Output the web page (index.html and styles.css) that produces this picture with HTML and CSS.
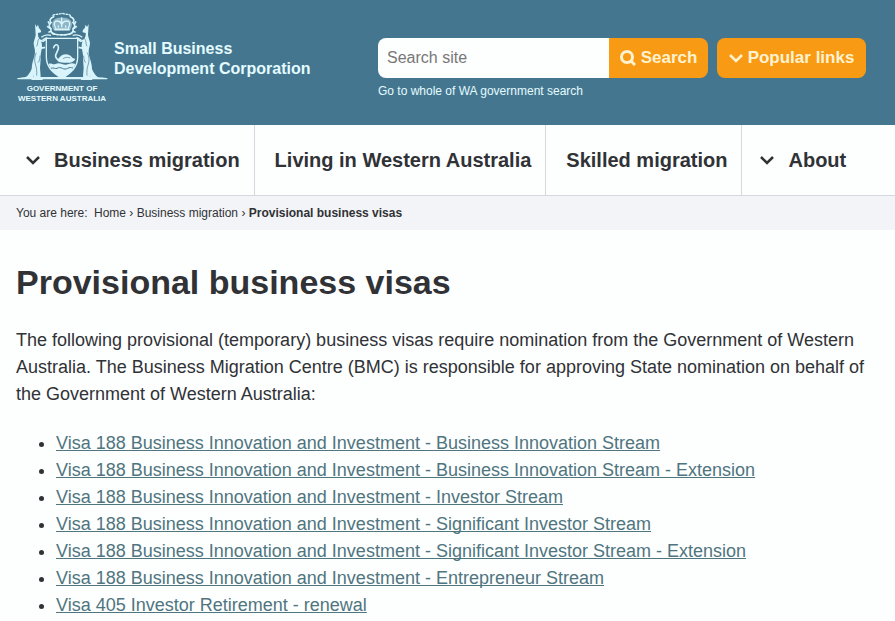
FILE: index.html
```
<!DOCTYPE html>
<html lang="en">
<head>
    <meta charset="UTF-8">
    <meta name="viewport" content="width=device-width, initial-scale=1.0">
    <title>Provisional business visas - Small Business Development Corporation</title>
    <link rel="stylesheet" href="styles.css">
</head>
<body>
    <header class="site-header">
        <div class="brand">
            <a href="#" class="crest">
                <svg class="crest-image" viewBox="45 36 276 204" aria-hidden="true">
                    <!-- mantling and crown -->
                    <path d="M158 60c8-10 40-10 50 0 8 10 4 24-2 32h-46c-8-8-10-22-2-32z" fill="#8fb6c6"/>
                    <g fill="none" stroke="#d9f5fb" stroke-width="5" stroke-linecap="round">
                        <path d="M158 50c-10 4-14 12-8 18-8 6-6 14 0 18-2 8 2 14 10 16M208 50c10 4 14 12 8 18 8 6 6 14 0 18 2 8-2 14-10 16"/>
                        <path d="M142 66l4 6M140 80l6 4M144 96l6-2M224 66l-4 6M226 80l-6 4M222 96l-6-2"/>
                        <path d="M156 46c6-4 12-2 18-4s12-2 18 0 10 0 16 4" stroke-width="4" stroke-dasharray="5 5"/>
                        <path d="M164 84c-8-12-4-22 6-21 8 0 10 6 12 10 2-4 6-10 14-10 10-1 14 9 6 21" stroke-width="4"/>
                        <path d="M182 54v26M172 78v3M194 78v3" stroke-width="4"/>
                        <path d="M162 88h42"/>
                        <path d="M156 101c16 5 38 5 54 0" stroke-dasharray="7 4"/>
                    </g>
                    <!-- shield -->
                    <path d="M136 115h94v56c0 31-20 48-47 64-27-16-47-33-47-64z" fill="#47778f" stroke="#d9f5fb" stroke-width="4"/>
                    <path d="M143 192c8-5 12 3 20 0s12-3 20 0 12 3 20 0 12-3 20 0c-5 20-20 31-40 42-20-11-34-22-40-42z" fill="#d9f5fb"/>
                    <path d="M150 205c8-4 12 3 18 0s10-3 16 0 10 3 16 0 10-3 16-1" fill="none" stroke="#47778f" stroke-width="3"/>
                    <!-- swan -->
                    <path d="M158 143c2-10 12-12 14-3 3 11-10 19-8 30 1 6 5 9 10 11" fill="none" stroke="#d9f5fb" stroke-width="5" stroke-linecap="round"/>
                    <path d="M169 183c3-10 14-21 27-20 9 1 15 6 19 11l8 3c-4 7-9 10-16 11-13 1-27 1-38-5z" fill="#d9f5fb"/>
                    <path d="M186 176c8-5 15-5 22-2" fill="none" stroke="#47778f" stroke-width="2"/>
                    <!-- kangaroos -->
                    <g id="kangaroo">
                        <path d="M102 72l5 9 4-7 3 11c5 4 7 8 6 12l-9 2c-1 8 2 15 7 21 5 8 6 17 4 27-2 12-4 19-3 29l-2 28 2 25-3 6 9 2v5H92l-1-6 8-5c-5-9-8-21-6-35 2-15 9-26 9-40 0-12-4-18-4-27 1-9 5-15 6-24z" fill="#d9f5fb"/>
                        <path d="M96 198c-6 14-12 29-25 35l27 2z" fill="#d9f5fb"/>
                        <path d="M113 119l13 5 9-6M112 135l11 9 9-2" fill="none" stroke="#d9f5fb" stroke-width="5"/>
                        <path d="M106 158c-5 10-7 22-3 34s5 22 4 35M114 116c-6 8-2 14-7 23M111 188c4-4 6-12 6-21" fill="none" stroke="#47778f" stroke-width="2"/>
                        <path d="M121 112c9-8 17-9 29-6M124 121c6-5 8-7 15-8" fill="none" stroke="#d9f5fb" stroke-width="4"/>
                    </g>
                    <use href="#kangaroo" transform="translate(365 0) scale(-1 1)"/>
                    <path d="M48 235c22-6 42-4 58-4h156c16 0 38 0 58 4l-2 3H50z" fill="#d9f5fb"/>
                </svg>
                <span class="crest-text">Government of<br>Western Australia</span>
            </a>
            <a href="#" class="brand-name">Small Business<br>Development Corporation</a>
        </div>
        <div class="header-tools">
            <div class="tools-row">
                <form class="search-form" action="#">
                    <input type="text" class="search-input" placeholder="Search site" aria-label="Search site">
                    <button type="submit" class="btn search-button">
                        <svg class="search-icon" viewBox="0 0 16 16" aria-hidden="true"><circle cx="7" cy="7" r="5.5"/><path d="M11 11l4 4"/></svg>
                        Search
                    </button>
                </form>
                <button type="button" class="btn popular-button">
                    <svg class="chevron" viewBox="0 0 14 10" aria-hidden="true"><path d="M1 2l6 6 6-6"/></svg>
                    Popular links
                </button>
            </div>
            <a href="#" class="whole-search">Go to whole of WA government search</a>
        </div>
    </header>

    <nav class="main-nav">
        <a href="#" class="has-menu"><svg class="chevron" viewBox="0 0 14 10" aria-hidden="true"><path d="M1 2l6 6 6-6"/></svg>Business migration</a>
        <a href="#">Living in Western Australia</a>
        <a href="#">Skilled migration</a>
        <a href="#" class="has-menu"><svg class="chevron" viewBox="0 0 14 10" aria-hidden="true"><path d="M1 2l6 6 6-6"/></svg>About</a>
    </nav>

    <div class="breadcrumb">
        <span class="breadcrumb-label">You are here:</span>
        <a href="#">Home</a> › <a href="#">Business migration</a> › <strong>Provisional business visas</strong>
    </div>

    <main class="content">
        <h1>Provisional business visas</h1>
        <p>The following provisional (temporary) business visas require nomination from the Government of Western Australia. The Business Migration Centre (BMC) is responsible for approving State nomination on behalf of the Government of Western Australia:</p>
        <ul>
            <li><a href="#">Visa 188 Business Innovation and Investment - Business Innovation Stream</a></li>
            <li><a href="#">Visa 188 Business Innovation and Investment - Business Innovation Stream - Extension</a></li>
            <li><a href="#">Visa 188 Business Innovation and Investment - Investor Stream</a></li>
            <li><a href="#">Visa 188 Business Innovation and Investment - Significant Investor Stream</a></li>
            <li><a href="#">Visa 188 Business Innovation and Investment - Significant Investor Stream - Extension</a></li>
            <li><a href="#">Visa 188 Business Innovation and Investment - Entrepreneur Stream</a></li>
            <li><a href="#">Visa 405 Investor Retirement - renewal</a></li>
        </ul>
    </main>
</body>
</html>
```
FILE: styles.css
```
* {
    box-sizing: border-box;
}
body {
    font-family: "Liberation Sans", Arial, sans-serif;
    font-size: 18px;
    line-height: 27px;
    background-color: #fdfefe;
    color: #303236;
    margin: 0;
}
a {
    color: inherit;
    text-decoration: none;
}

/* header */
.site-header {
    display: flex;
    background-color: #44778f;
    color: #e4fbff;
    padding: 12px 29px 21px 16px;
}
.brand {
    display: flex;
    flex: 0 0 362px;
    gap: 6px;
}
.crest {
    display: flex;
    flex-direction: column;
    align-items: center;
    width: 92px;
}
.crest-image {
    display: block;
    width: 92px;
    height: 68px;
}
.crest-text {
    font-size: 8px;
    font-weight: bold;
    line-height: 10px;
    margin-top: 4px;
    text-align: center;
    text-transform: uppercase;
    white-space: nowrap;
}
.brand-name {
    font-size: 16px;
    font-weight: bold;
    line-height: 20px;
    padding-top: 27px;
    white-space: nowrap;
}
.header-tools {
    flex: 1;
    padding-top: 26px;
}
.tools-row {
    display: flex;
    gap: 9px;
    height: 40px;
}
.search-form {
    display: flex;
    flex: 1;
    margin: 0;
}
.search-input {
    flex: 1;
    min-width: 0;
    background-color: #fdfefe;
    border: none;
    border-radius: 8px 0 0 8px;
    font-family: inherit;
    font-size: 16px;
    padding: 0 9px;
}
.search-input::placeholder {
    color: #777;
}
.btn {
    display: flex;
    align-items: center;
    justify-content: center;
    gap: 5px;
    background-color: #f99a14;
    color: #fff3cf;
    border: none;
    border-radius: 8px;
    cursor: pointer;
    font-family: inherit;
    font-size: 17px;
    font-weight: bold;
    padding: 0;
    white-space: nowrap;
}
.search-button {
    border-radius: 0 8px 8px 0;
    width: 99px;
}
.popular-button {
    width: 149px;
}
.search-icon {
    fill: none;
    stroke: currentColor;
    stroke-width: 3;
    width: 16px;
    height: 16px;
}
.chevron {
    fill: none;
    stroke: currentColor;
    stroke-width: 2.5;
    width: 14px;
    height: 10px;
}
.whole-search {
    display: block;
    font-size: 12px;
    line-height: 16px;
    margin-top: 5px;
}

/* navigation */
.main-nav {
    display: flex;
    border-bottom: 1px solid #d5d8dc;
}
.main-nav a {
    display: flex;
    align-items: center;
    height: 70px;
    font-size: 20px;
    font-weight: bold;
    padding: 0 14px 0 20px;
    border-right: 1px solid #d5d8dc;
    white-space: nowrap;
}
.main-nav a:last-child {
    border-right: none;
}
.main-nav .chevron {
    margin-right: 14px;
}
.main-nav .has-menu {
    padding-left: 18px;
}
.main-nav .has-menu:first-child {
    padding-left: 26px;
}

/* breadcrumb */
.breadcrumb {
    background-color: #f3f4f7;
    font-size: 12px;
    line-height: 18px;
    padding: 8px 16px;
}
.breadcrumb-label {
    margin-right: 3px;
}

/* page content */
.content {
    padding: 32px 16px 0;
}
.content h1 {
    font-size: 34px;
    line-height: 40px;
    margin: 0 0 25px;
}
.content p {
    margin: 0 0 22px;
}
.content ul {
    margin: 0;
    padding-left: 40px;
}
.content li a {
    color: #4f757e;
    text-decoration: underline;
    text-decoration-skip-ink: none;
}
```
